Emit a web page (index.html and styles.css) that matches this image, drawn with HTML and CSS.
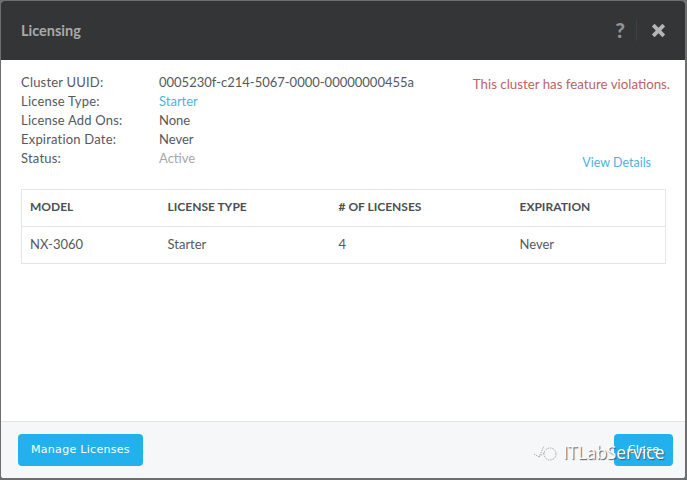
FILE: index.html
```html
<!DOCTYPE html>
<html lang="en">
<head>
    <meta charset="UTF-8">
    <title>Licensing</title>
    <link rel="stylesheet" href="styles.css">
</head>
<body>
    <div class="modal">
        <div class="modal-header">
            <h2>Licensing</h2>
            <div class="header-actions">
                <span class="help">?</span>
                <span class="divider"></span>
                <svg class="close" width="15" height="15" viewBox="0 0 15 15"><path d="M2.2 2.2 L12.8 12.8 M12.8 2.2 L2.2 12.8" stroke="#b5b5b5" stroke-width="3.8" fill="none"/></svg>
            </div>
        </div>
        <div class="modal-body">
            <div class="summary">
                <dl class="info">
                    <dt>Cluster UUID:</dt><dd>0005230f-c214-5067-0000-00000000455a</dd>
                    <dt>License Type:</dt><dd class="link">Starter</dd>
                    <dt>License Add Ons:</dt><dd>None</dd>
                    <dt>Expiration Date:</dt><dd>Never</dd>
                    <dt>Status:</dt><dd class="muted">Active</dd>
                </dl>
                <div class="side">
                    <div class="violation">This cluster has feature violations.</div>
                    <a class="link details">View Details</a>
                </div>
            </div>
            <table class="licenses">
                <thead>
                    <tr><th class="col-model">Model</th><th class="col-type">License Type</th><th class="col-count"># of Licenses</th><th>Expiration</th></tr>
                </thead>
                <tbody>
                    <tr><td>NX-3060</td><td>Starter</td><td>4</td><td>Never</td></tr>
                </tbody>
            </table>
        </div>
        <div class="modal-footer">
            <button class="btn btn-manage">Manage Licenses</button>
            <button class="btn btn-close">Close</button>
        </div>
    </div>
    <div class="watermark">
        <svg width="26" height="20" viewBox="0 0 26 20"><g fill="none" stroke="#a8a8a8" stroke-width="1" stroke-dasharray="1.5 1"><circle cx="17" cy="12" r="6"/><path d="M1 12 L6 15 L11 4 M6 15 L12 10"/></g></svg>
        <span>ITLabService</span>
    </div>
</body>
</html>
```

FILE: styles.css
```css
* {
    box-sizing: border-box;
}
html, body {
    height: 100%;
}
body {
    margin: 0;
    padding: 1px 2px 2px 1px;
    background: #6e6e6e;
    font-family: "Lato", "Liberation Sans", sans-serif;
    font-size: 13px;
    color: #55595e;
    position: relative;
    overflow: hidden;
}
.modal {
    height: 477px;
    background: #fff;
    display: flex;
    flex-direction: column;
    border-radius: 3px;
    overflow: hidden;
}
.modal-header {
    height: 59px;
    flex-shrink: 0;
    background: #333537;
    display: flex;
    align-items: center;
    justify-content: space-between;
    padding: 0 19px 1px 20px;
}
.modal-header h2 {
    margin: 0;
    font-size: 14.5px;
    font-weight: 700;
    color: #a9a9a9;
}
.header-actions {
    display: flex;
    align-items: center;
}
.help {
    font-size: 21px;
    font-weight: 900;
    color: #8f9294;
    line-height: 20px;
}
.divider {
    width: 1px;
    height: 22px;
    background: #3e4042;
    margin: 0 14px 0 11px;
}
.close {
    display: block;
}
.modal-body {
    flex: 1;
    padding: 13px 20px 0;
}
.summary {
    display: flex;
    justify-content: space-between;
}
.info {
    margin: 0;
    display: grid;
    grid-template-columns: 138px auto;
    grid-auto-rows: 19px;
    line-height: 19px;
}
.info dt {
    letter-spacing: 0.2px;
}
.info dd {
    margin: 0;
}
.link {
    color: #4fb3dc;
}
.muted {
    color: #a5a8ab;
}
.side {
    display: flex;
    flex-direction: column;
    align-items: flex-end;
}
.violation {
    color: #bb6464;
    font-size: 13.3px;
    line-height: 19px;
    margin: 2px -5px 0 0;
}
.details {
    font-size: 12.5px;
    margin: 59px 14px 0 0;
    line-height: 19px;
}
.licenses {
    width: 645px;
    margin-top: 17px;
    border: 1px solid #e4e6e8;
    border-collapse: collapse;
    table-layout: fixed;
}
.licenses th {
    height: 37px;
    padding: 0 8px 4px;
    text-align: left;
    text-transform: uppercase;
    font-size: 12px;
    font-weight: 700;
    color: #4b4f54;
    border-bottom: 1px solid #e4e6e8;
}
.licenses td {
    height: 37px;
    padding: 0 8px 3px;
}
.col-model {
    width: 138px;
}
.col-type {
    width: 171px;
}
.col-count {
    width: 181px;
}
.modal-footer {
    height: 57px;
    flex-shrink: 0;
    background: #f6f7f8;
    border-top: 1px solid #e2e3e5;
    display: flex;
    justify-content: space-between;
    align-items: flex-start;
    padding: 12px 12px 0 17px;
}
.btn {
    height: 32px;
    border: none;
    border-radius: 4px;
    background: #22b1ec;
    color: #fff;
    font-family: "DejaVu Sans", sans-serif;
    font-size: 11px;
    letter-spacing: 0.3px;
    padding: 0 13px 2px;
}
.btn-close {
    width: 59px;
}
.watermark {
    position: absolute;
    left: 533px;
    top: 440px;
    display: flex;
    align-items: center;
    gap: 4px;
    color: #fff;
    font-family: "Open Sans", sans-serif;
    font-size: 17.4px;
    text-shadow: 1px 1px 1px #555;
}
```
